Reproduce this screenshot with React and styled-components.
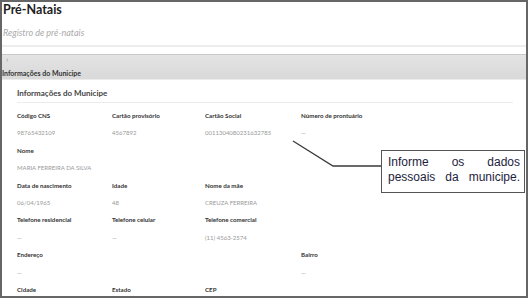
import React from "react";
import styled, { createGlobalStyle } from "styled-components";

const Global = createGlobalStyle`
  html, body { margin: 0; padding: 0; background: #fff; }
  body { font-family: Lato, "Open Sans", sans-serif; }
`;

const Frame = styled.div`
  position: relative;
  box-sizing: border-box;
  width: 528px;
  height: 298px;
  border: 2px solid #666;
  overflow: hidden;
  background: #fff;
`;

const Header = styled.div`
  padding-left: 1px;
`;

const Title = styled.h1`
  margin: 0;
  font-size: 12.5px;
  line-height: 15px;
  font-weight: 700;
  color: #222;
`;

const Subtitle = styled.p`
  margin: 10px 0 0;
  font-size: 9px;
  line-height: 12px;
  font-style: italic;
  color: #aaa;
`;

const Divider = styled.div`
  margin-top: 6px;
  height: 2px;
  background: #ededed;
`;

const Bar = styled.div`
  margin-top: 7px;
  height: 26px;
  box-sizing: border-box;
  border-top: 1px solid #c9c9c9;
  border-bottom: 1px solid #ebebeb;
  background: linear-gradient(#e3e3e3, #d9d9d9);
  display: flex;
  flex-direction: column;
`;

const Chevron = styled.span`
  margin: 0 0 0 4px;
  font-size: 8px;
  line-height: 8px;
  color: #999;
`;

const BarLabel = styled.span`
  margin-top: 6px;
  font-size: 7px;
  line-height: 8px;
  font-weight: 700;
  color: #333;
`;

const Content = styled.div`
  padding: 0 13px 0 15px;
`;

const SectionTitle = styled.h2`
  margin: 7px 0 0;
  font-size: 8px;
  line-height: 12px;
  font-weight: 700;
  color: #444;
`;

const Rule = styled.div`
  margin-top: 3px;
  height: 1px;
  background: #ececec;
`;

const Grid = styled.div`
  margin-top: 4px;
  display: grid;
  grid-template-columns: 95px 93px 96px 1fr;
`;

const Field = styled.div`
  grid-column: ${(p) => p.$col || "auto"} / span ${(p) => p.$span || 1};
  display: flex;
  flex-direction: column;
`;

const Label = styled.span`
  font-size: 6.2px;
  line-height: 17.4px;
  font-weight: 700;
  color: #333;
  white-space: nowrap;
`;

const Value = styled.span`
  font-size: 6px;
  line-height: 17.4px;
  color: #999;
  white-space: nowrap;
`;

const Leader = styled.svg`
  position: absolute;
  left: 0;
  top: 0;
  pointer-events: none;
`;

const Callout = styled.div`
  position: absolute;
  left: 379px;
  top: 148px;
  width: 144px;
  height: 43px;
  box-sizing: border-box;
  border: 1.5px solid #555;
  background: #fff;
  padding: 4px 4px 0 6px;
  font-family: "Liberation Sans", Arial, sans-serif;
  font-size: 12px;
  line-height: 15px;
  color: #1d1d3d;
  text-align: justify;
  text-align-last: justify;
`;

const rows = [
  [
    { label: "Código CNS", value: "98765432109" },
    { label: "Cartão provisório", value: "4567892" },
    { label: "Cartão Social", value: "0011304080231632785" },
    { label: "Número de prontuário", value: "—" },
  ],
  [{ label: "Nome", value: "MARIA FERREIRA DA SILVA", span: 4 }],
  [
    { label: "Data de nascimento", value: "06/04/1965" },
    { label: "Idade", value: "48" },
    { label: "Nome da mãe", value: "CREUZA FERREIRA", span: 2 },
  ],
  [
    { label: "Telefone residencial", value: "—" },
    { label: "Telefone celular", value: "—" },
    { label: "Telefone comercial", value: "(11) 4563-2574", span: 2 },
  ],
  [
    { label: "Endereço", value: "—", span: 3 },
    { label: "Bairro", value: "—" },
  ],
  // last row is cut by the frame, only the labels show
  [{ label: "Cidade" }, { label: "Estado" }, { label: "CEP", span: 2 }],
];

export default function App() {
  return (
    <>
      <Global />
      <Frame>
        <Header>
          <Title>Pré-Natais</Title>
          <Subtitle>Registro de pré-natais</Subtitle>
        </Header>
        <Divider />
        <Bar>
          <Chevron>›</Chevron>
          <BarLabel>Informações do Municipe</BarLabel>
        </Bar>
        <Content>
          <SectionTitle>Informações do Municipe</SectionTitle>
          <Rule />
          <Grid>
            {rows.map((row) =>
              row.map((f, i) => (
                <Field key={f.label} $col={i === 0 ? 1 : undefined} $span={f.span}>
                  <Label>{f.label}</Label>
                  {f.value && <Value>{f.value}</Value>}
                </Field>
              ))
            )}
          </Grid>
        </Content>
        <Leader width="528" height="298">
          <polyline points="291,139 331,164 379,164" fill="none" stroke="#3a3a3a" strokeWidth="1.3" />
        </Leader>
        <Callout>Informe os dados pessoais da municipe.</Callout>
      </Frame>
    </>
  );
}
